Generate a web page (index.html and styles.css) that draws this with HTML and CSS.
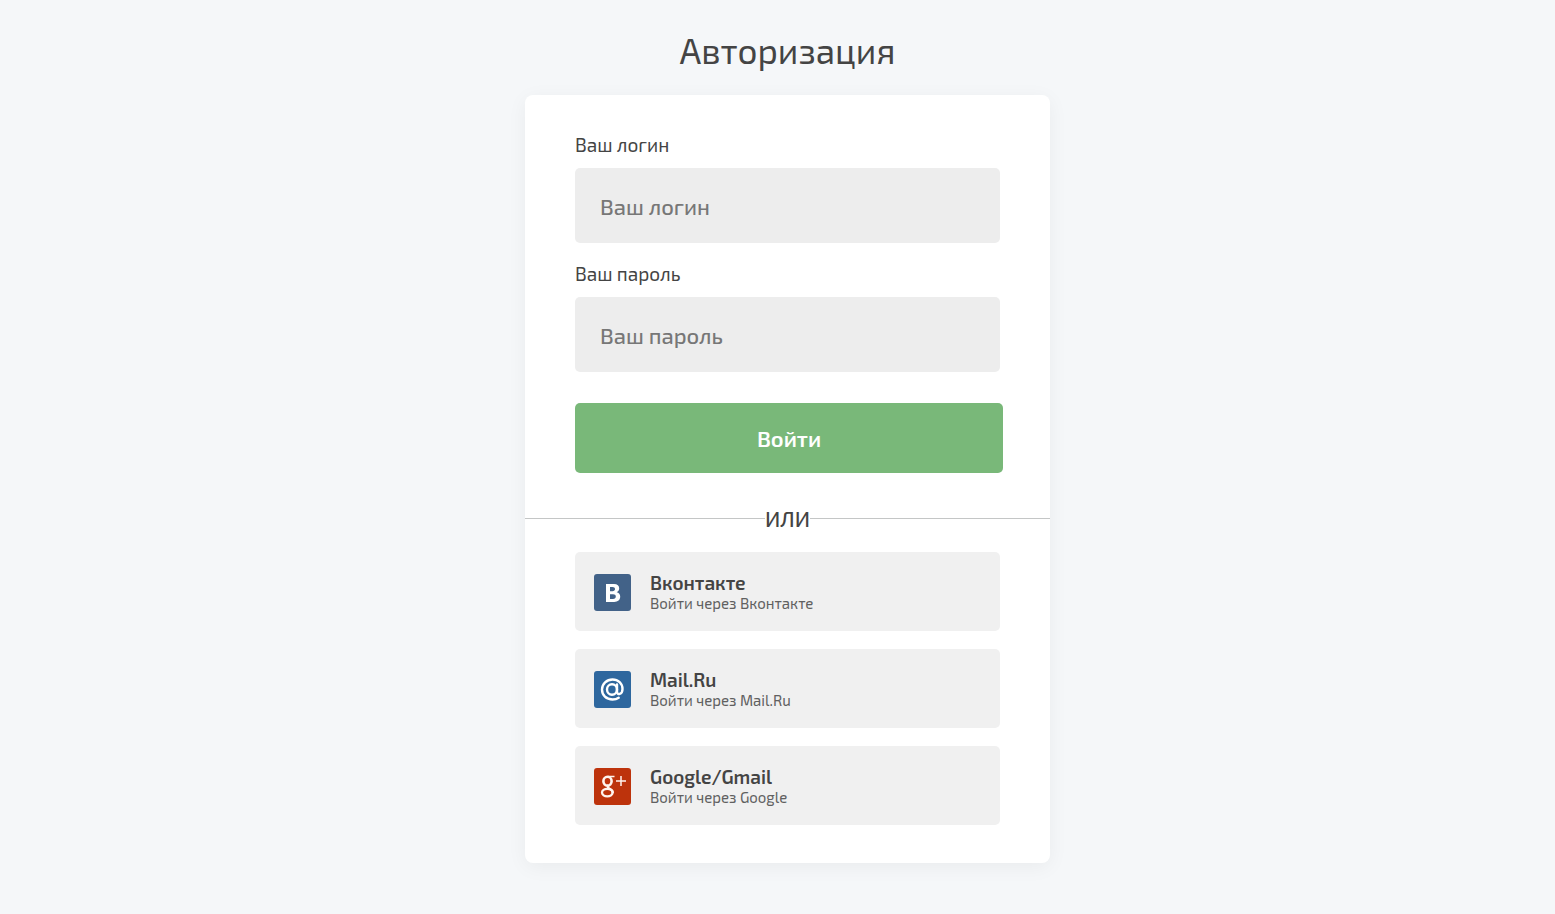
FILE: index.html
```html
<!DOCTYPE html>
<html lang="ru">
<head>
  <meta charset="utf-8">
  <meta name="viewport" content="width=device-width, initial-scale=1">
  <title>Авторизация</title>
  <link rel="stylesheet" href="styles.css">
</head>
<body>
  <main class="page">
    <h1 class="title">Авторизация</h1>
    <section class="card">
      <form class="form">
        <div class="field">
          <label class="label" for="login">Ваш логин</label>
          <input class="input" id="login" type="text" placeholder="Ваш логин">
        </div>
        <div class="field">
          <label class="label" for="password">Ваш пароль</label>
          <input class="input" id="password" type="password" placeholder="Ваш пароль">
        </div>
        <button class="submit" type="submit">Войти</button>
      </form>

      <div class="divider">ИЛИ</div>

      <div class="socials">
        <a class="social" href="#">
          <svg class="icon" viewBox="0 0 37 37" aria-hidden="true">
            <rect width="37" height="37" rx="3" fill="#426288"/>
            <path fill="#fff" fill-rule="evenodd" d="M12 10h8c3.400 0 5.200 1.600 5.200 4.300 0 2-.9 3.300-2.500 3.900 2.200.5 3.500 2 3.500 4.400 0 3.400-2.300 5.400-6 5.400H12zM16 13v4.200h2.500c1.600 0 2.500-.7 2.500-2.100s-.9-2.100-2.500-2.100zM16 20.200V25h3c1.800 0 2.800-.8 2.800-2.400s-1-2.400-2.800-2.400z"/>
          </svg>
          <span class="social-text">
            <span class="social-name">Вконтакте</span>
            <span class="social-note">Войти через Вконтакте</span>
          </span>
        </a>
        <a class="social" href="#">
          <svg class="icon" viewBox="0 0 37 37" aria-hidden="true">
            <rect width="37" height="37" rx="3" fill="#2e679e"/>
            <g fill="none" stroke="#fff" stroke-width="2.400" stroke-linecap="round">
              <ellipse cx="18" cy="18.500" rx="5" ry="5.300"/>
              <path d="M23 13.500v7.500c0 3.200 5.500 2.900 5.500-3 0-5.500-4.300-9.500-10-9.500S8 12.700 8 18.500s4.300 10 10.500 10c2.500 0 4.500-.6 6.200-1.800"/>
            </g>
          </svg>
          <span class="social-text">
            <span class="social-name">Mail.Ru</span>
            <span class="social-note">Войти через Mail.Ru</span>
          </span>
        </a>
        <a class="social" href="#">
          <svg class="icon" viewBox="0 0 37 37" aria-hidden="true">
            <rect width="37" height="37" rx="3" fill="#bd330c"/>
            <g fill="none" stroke="#fff4ee">
              <ellipse cx="13.500" cy="13.200" rx="4.100" ry="4.400" stroke-width="2.600"/>
              <path stroke-width="1.500" d="M14 8.500h6.500"/>
              <path stroke-width="2.400" d="M14.500 17.300c-1.500 2.200-.5 2.700 1.500 3.700 2 1 3 2.200 2.700 4"/>
              <ellipse cx="13.300" cy="24.600" rx="5.300" ry="3.700" stroke-width="2.300"/>
              <path stroke-width="1.500" d="M27 8v10M22 13h10"/>
            </g>
          </svg>
          <span class="social-text">
            <span class="social-name">Google/Gmail</span>
            <span class="social-note">Войти через Google</span>
          </span>
        </a>
      </div>
    </section>
  </main>
</body>
</html>
```
FILE: styles.css
```css
* {
  box-sizing: border-box;
}

body {
  margin: 0;
  background: #f5f7f9;
  color: #444;
  font-family: "Exo 2", "Noto Sans", "Open Sans", sans-serif;
}

.page {
  display: flex;
  flex-direction: column;
  align-items: center;
  padding: 25px 0 50px 20px;
}

.title {
  margin: 0 0 20px;
  font-size: 35px;
  font-weight: 400;
  line-height: 50px;
}

.card {
  width: 100%;
  max-width: 525px;
  padding: 39px 50px 38px;
  border-radius: 8px;
  background: #fff;
  box-shadow: 0 4px 20px rgba(0, 0, 0, 0.05);
}

.form {
  display: flex;
  flex-direction: column;
  gap: 20px;
}

.field {
  display: flex;
  flex-direction: column;
  gap: 12px;
}

.label {
  font-size: 19px;
  line-height: 22px;
}

.input {
  width: 100%;
  height: 75px;
  padding: 0 25px;
  border: 0;
  border-radius: 5px;
  background: #ededed;
  color: #444;
  font: 500 22px "Exo 2", "Noto Sans", "Open Sans", sans-serif;
}

.input::placeholder {
  color: #777;
  opacity: 1;
}

.submit {
  height: 70px;
  margin: 11px -3px 0 0;
  padding: 0;
  border: 0;
  border-radius: 5px;
  background: #79b879;
  color: #fff;
  font: 600 22px "Exo 2", "Noto Sans", "Open Sans", sans-serif;
  cursor: pointer;
}

.divider {
  display: flex;
  align-items: center;
  margin: 31px -50px 20px;
  font-size: 22px;
  font-weight: 500;
  line-height: 28px;
}

.divider::before,
.divider::after {
  content: "";
  flex: 1;
  height: 1px;
  background: #c4c6c6;
}

.socials {
  display: flex;
  flex-direction: column;
  gap: 18px;
}

.social {
  display: flex;
  align-items: center;
  gap: 19px;
  min-height: 79px;
  padding: 1px 19px 0;
  border-radius: 5px;
  background: #f0f0f0;
  color: #444;
  text-decoration: none;
}

.icon {
  flex: none;
  width: 37px;
  height: 37px;
}

.social-text {
  display: flex;
  flex-direction: column;
}

.social-name {
  font-size: 19px;
  font-weight: 600;
  line-height: 22px;
}

.social-note {
  color: #606060;
  font-size: 15px;
  line-height: 19px;
}
```
